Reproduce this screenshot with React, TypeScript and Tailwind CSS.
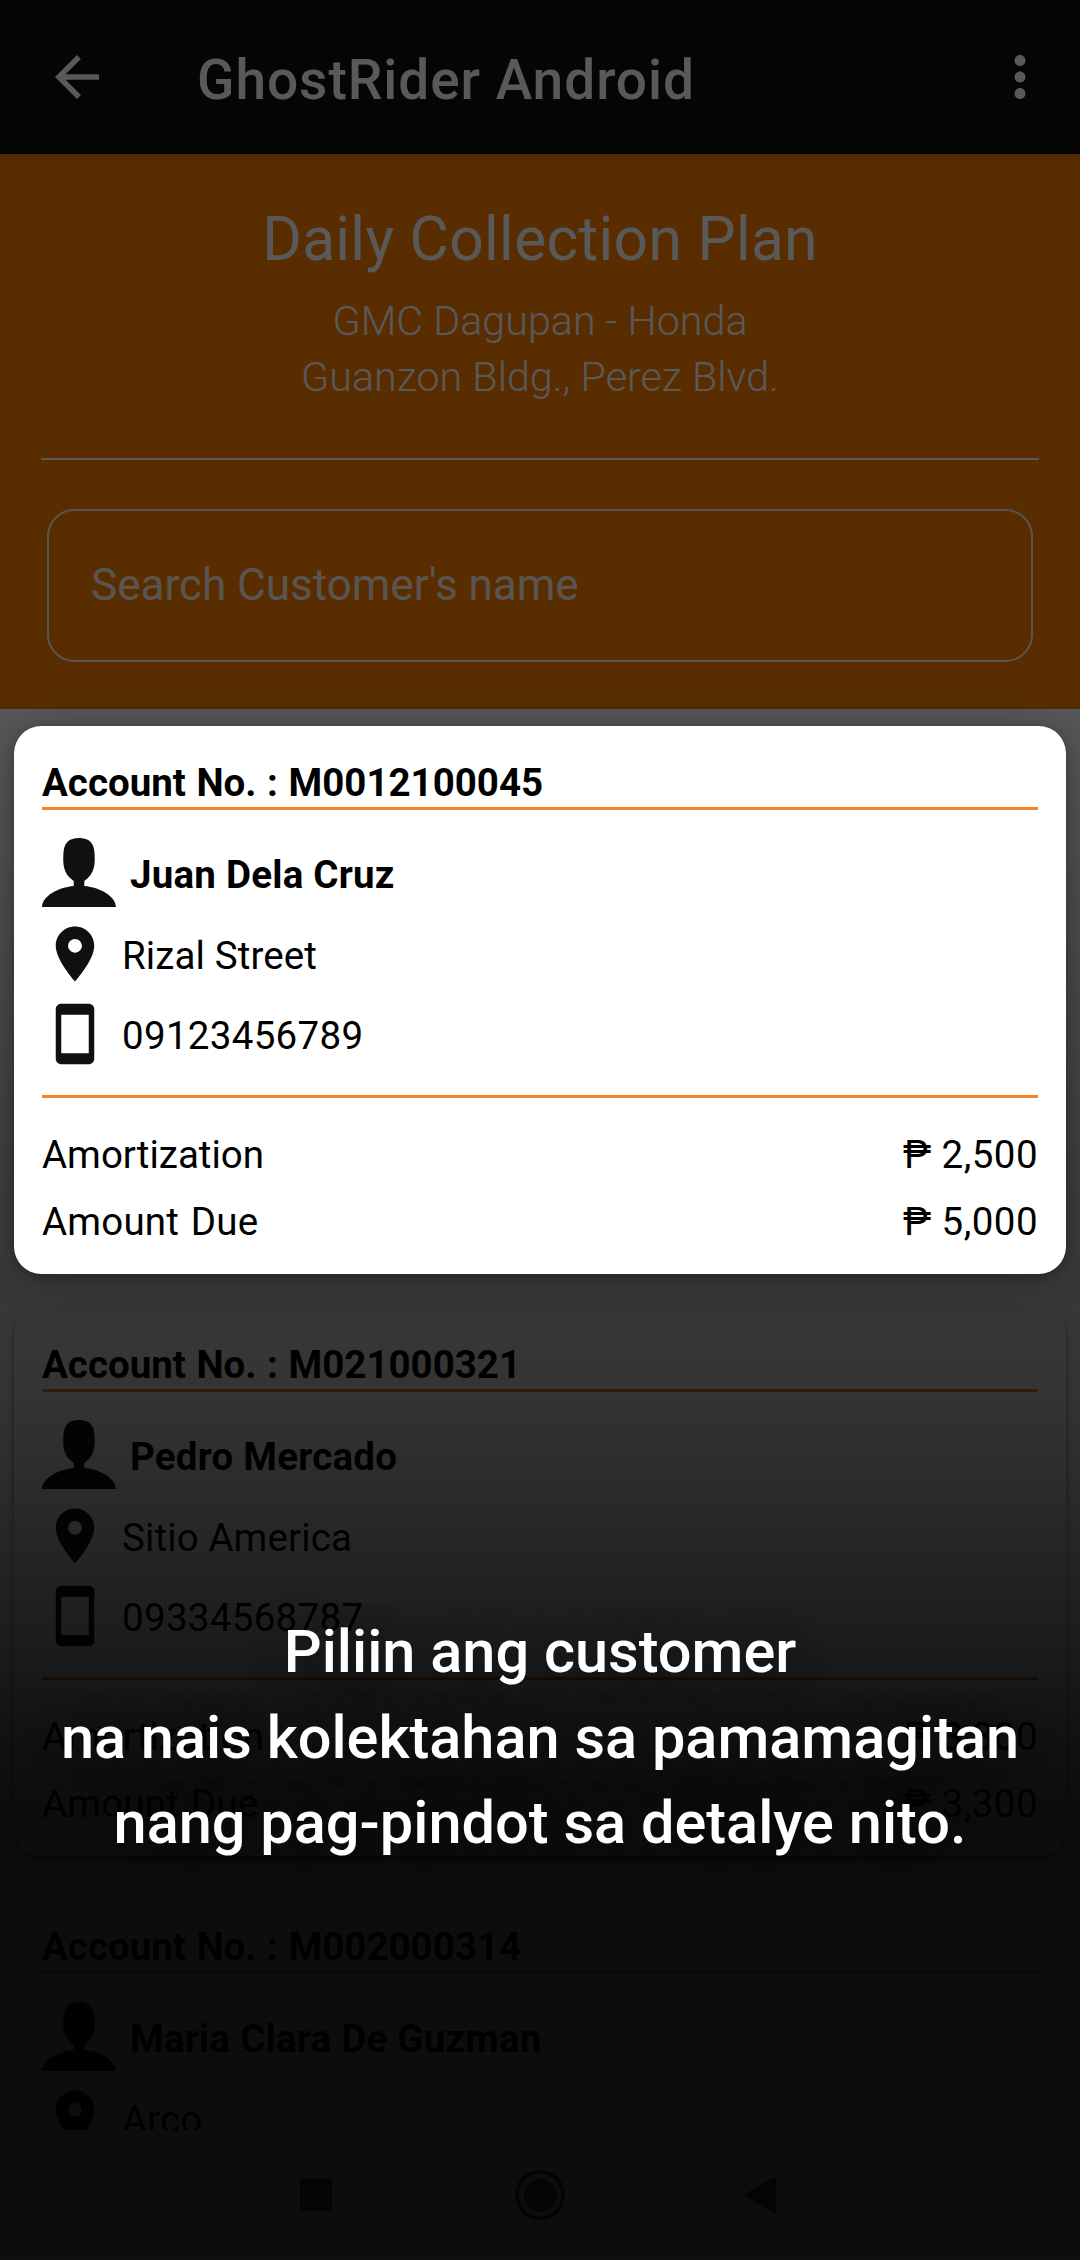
type Account = {
  number: string;
  name: string;
  address: string;
  phone: string;
  amortization: string;
  due: string;
};

const accounts: Account[] = [
  { number: "M0012100045", name: "Juan Dela Cruz", address: "Rizal Street", phone: "09123456789", amortization: "2,500", due: "5,000" },
  { number: "M021000321", name: "Pedro Mercado", address: "Sitio America", phone: "09334568787", amortization: "3,300", due: "3,300" },
  { number: "M002000314", name: "Maria Clara De Guzman", address: "Arco", phone: "09171234567", amortization: "1,800", due: "1,800" },
];

function MaterialIcon({ d }: { d: string }) {
  return (
    <svg viewBox="0 0 24 24" className="h-[66px] w-[66px] shrink-0" fill="currentColor">
      <path d={d} />
    </svg>
  );
}

const ARROW_BACK = "M20 11H7.83l5.59-5.59L12 4l-8 8 8 8 1.41-1.41L7.83 13H20v-2z";
const MORE_VERT =
  "M12 8c1.1 0 2-.9 2-2s-.9-2-2-2-2 .9-2 2 .9 2 2 2zm0 2c-1.1 0-2 .9-2 2s.9 2 2 2 2-.9 2-2-.9-2-2-2zm0 6c-1.1 0-2 .9-2 2s.9 2 2 2 2-.9 2-2-.9-2-2-2z";
const PLACE =
  "M12 2C8.13 2 5 5.13 5 9c0 5.25 7 13 7 13s7-7.75 7-13c0-3.87-3.13-7-7-7zm0 9.5c-1.38 0-2.5-1.12-2.5-2.5s1.12-2.5 2.5-2.5 2.5 1.12 2.5 2.5-1.12 2.5-2.5 2.5z";
const SMARTPHONE =
  "M17 1.01L7 1c-1.1 0-2 .9-2 2v18c0 1.1.9 2 2 2h10c1.1 0 2-.9 2-2V3c0-1.1-.9-1.99-2-1.99zM17 19H7V5h10v14z";

function PersonIcon() {
  return (
    <svg viewBox="0 0 74 69" className="h-[69px] w-[74px] shrink-0" fill="currentColor">
      <path d="M37 0C47 0 52.3 4.5 52.6 16C53 25 53.4 35.5 42.3 43V48C58 49.5 73.5 58 74 69H0C.5 58 16 49.5 31.7 48V43C20.6 35.5 21 25 21.4 16C21.7 4.5 27 0 37 0Z" />
    </svg>
  );
}

function Rule() {
  return <div className="h-[3px] bg-[#f58325]" />;
}

function AccountCard({ account, focused }: { account: Account; focused: boolean }) {
  return (
    <article
      className={
        "h-[548px] shrink-0 rounded-[27.5px] bg-white px-7 pt-[35px] text-[38.5px] leading-[44px] text-black " +
        (focused
          ? "relative z-20 shadow-[0_3px_10px_rgba(0,0,0,0.25),0_6px_60px_rgba(0,0,0,0.26)]"
          : "shadow-[0_4px_7px_rgba(0,0,0,0.45)]")
      }
    >
      <h2 className="font-bold [word-spacing:1px]">Account No. : {account.number}</h2>
      <div className="mt-[2px]">
        <Rule />
      </div>
      <div className="mt-7 flex items-center text-[#101010]">
        <PersonIcon />
        <span className="mt-[5px] ml-[14px] font-bold tracking-[0.006em] text-black">{account.name}</span>
      </div>
      <div className="mt-[13.5px] flex items-center text-[#101010]">
        <MaterialIcon d={PLACE} />
        <span className="mt-[5px] ml-[14px] tracking-[0.003em] text-black">{account.address}</span>
      </div>
      <div className="mt-[14.5px] mb-7 flex items-center text-[#101010]">
        <MaterialIcon d={SMARTPHONE} />
        <span className="mt-[3px] ml-[14px] tracking-[0.008em] text-black">{account.phone}</span>
      </div>
      <Rule />
      <dl className="mt-[35px] flex flex-col gap-[23px]">
        <div className="flex justify-between">
          <dt>Amortization</dt>
          <dd className="tracking-[0.012em]">₱ {account.amortization}</dd>
        </div>
        <div className="flex justify-between">
          <dt className="tracking-[0.005em] [word-spacing:2px]">Amount Due</dt>
          <dd className="tracking-[0.012em]">₱ {account.due}</dd>
        </div>
      </dl>
    </article>
  );
}

export default function App() {
  return (
    <div className="relative flex h-[2260px] w-[1080px] flex-col overflow-hidden bg-white font-['Roboto',sans-serif]">
      <header className="relative flex h-[154px] shrink-0 items-start bg-[#0f0f0f] pt-11 pr-[27px] pl-11 text-white shadow-[0_4px_10px_rgba(0,0,0,0.12)]">
        <MaterialIcon d={ARROW_BACK} />
        <h1 className="mt-[3px] ml-[87px] flex-1 text-[55px] leading-[66px] font-medium tracking-[0.0175em]">GhostRider Android</h1>
        <MaterialIcon d={MORE_VERT} />
      </header>

      <section className="h-[555px] shrink-0 bg-[#ff8000] pt-[50px] text-center text-white">
        <h2 className="text-[60.5px] leading-[71px] tracking-[0.005em]">Daily Collection Plan</h2>
        <p className="mt-[18px] text-[41.25px] leading-[56px] font-light">
          GMC Dagupan - Honda
          <br />
          Guanzon Bldg., Perez Blvd.
        </p>
        <div className="mx-[41px] mt-[53px] h-[2px] bg-white" />
        <div className="mx-[47px] mt-[49px] flex h-[153px] items-center rounded-[27.5px] border-2 border-white/90 pb-[2px] pl-[42px] text-[44px] text-white/90">
          Search Customer's name
        </div>
      </section>

      <main className="flex h-[1421px] shrink-0 flex-col gap-[34px] px-[14px] pt-[17px]">
        {accounts.map((account, i) => (
          <AccountCard key={account.number} account={account} focused={i === 0} />
        ))}
      </main>

      <nav className="relative flex h-[130px] shrink-0 items-center bg-white pl-[300px]">
        <div className="h-8 w-8 rounded-[2px] bg-[#505050]" />
        <div className="ml-[183px] flex h-[50px] w-[50px] items-center justify-center rounded-full border-4 border-[#505050]">
          <div className="h-[33px] w-[33px] shrink-0 rounded-full bg-[#505050]" />
        </div>
        <svg viewBox="0 0 31 36" className="ml-[180px] h-9 w-[31px] text-[#505050]" fill="currentColor" stroke="currentColor" strokeWidth="4" strokeLinejoin="round">
          <path d="M29 2V34L2 18Z" />
        </svg>
      </nav>

      <div className="absolute inset-0 z-10 bg-[linear-gradient(to_bottom,rgba(0,0,0,0.65)_0px,rgba(0,0,0,0.65)_700px,rgba(0,0,0,0.775)_1300px,rgba(0,0,0,0.8)_1400px,rgba(0,0,0,0.84)_1510px,rgba(0,0,0,0.885)_1630px,rgba(0,0,0,0.935)_1740px,rgba(0,0,0,0.949)_1800px,rgba(0,0,0,0.949)_2260px)]" />

      <p className="absolute inset-x-0 top-[1610px] z-30 text-center text-[59.5px] leading-[85.5px] font-medium text-white [text-shadow:0_0_40px_rgba(0,0,0,0.25)]">
        Piliin ang customer
        <br />
        na nais kolektahan sa pamamagitan
        <br />
        nang pag-pindot sa detalye nito.
      </p>
    </div>
  );
}
